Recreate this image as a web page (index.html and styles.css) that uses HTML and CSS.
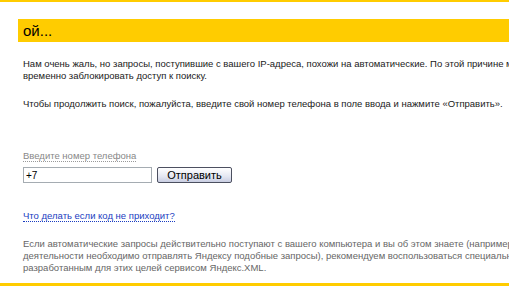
FILE: index.html
```html
<!DOCTYPE html>
<html lang="ru">
<head>
    <meta charset="UTF-8">
    <title>Ой...</title>
    <link rel="stylesheet" href="styles.css">
</head>
<body>
    <div class="topline"></div>
    <div class="page">
        <h1 class="title">ой...</h1>

        <div class="content">
            <p>Нам очень жаль, но запросы, поступившие с вашего IP-адреса, похожи на автоматические. По этой причине мы вынуждены временно заблокировать доступ к поиску.</p>
            <p>Чтобы продолжить поиск, пожалуйста, введите свой номер телефона в поле ввода и нажмите «Отправить».</p>

            <form class="phone-form" onsubmit="return false;">
                <label class="hint" for="phone">Введите номер телефона</label>
                <div class="row">
                    <input type="text" id="phone" value="+7">
                    <button type="submit">Отправить</button>
                </div>
            </form>

            <p class="help"><a href="#">Что делать если код не приходит?</a></p>

            <p class="note">Если автоматические запросы действительно поступают с вашего компьютера и вы об этом знаете (например, вам по роду деятельности необходимо отправлять Яндексу подобные запросы), рекомендуем воспользоваться специально разработанным для этих целей сервисом Яндекс.XML.</p>
        </div>
    </div>
    <div class="bottomline"></div>
</body>
</html>
```

FILE: styles.css
```css
html, body {
    margin: 0;
    padding: 0;
    overflow: hidden;
}
body {
    font-family: "Liberation Sans", Arial, sans-serif;
    font-size: 9.5px;
    color: #1a1a1a;
    background: #fff;
    width: 600px;
}
.topline {
    height: 2px;
    background: #ffcc00;
}
.page {
    padding: 17px 0 0 18px;
}
.title {
    margin: 0;
    background: #ffcc00;
    font-size: 15px;
    font-weight: normal;
    line-height: 23px;
    padding: 0 5px;
    color: #000;
}
.content {
    padding: 0 25px 0 5px;
}
.content p {
    margin: 16px 0;
    line-height: 12px;
}
.phone-form {
    margin-top: 40px;
    line-height: 12px;
}
.hint {
    color: #888;
    border-bottom: 1px dotted #999;
}
.row {
    display: flex;
    gap: 5px;
    margin-top: 5px;
}
.row input {
    box-sizing: border-box;
    width: 129px;
    height: 16px;
    padding: 0 2px;
    border: 1px solid #a5acb2;
    font-family: inherit;
    font-size: 10px;
    color: #000;
}
.row button {
    box-sizing: border-box;
    width: 75px;
    height: 16px;
    padding: 0;
    border: 1px solid #4c5060;
    border-radius: 2px;
    background: linear-gradient(#fff, #e4e7f2 60%, #c9cee2);
    font-family: inherit;
    font-size: 11px;
    line-height: 13px;
    color: #000;
}
.content .help {
    margin-top: 27px;
}
.help a {
    color: #1a3dc1;
    text-decoration: none;
    border-bottom: 1px dotted #1a3dc1;
}
.content .note {
    margin: 16px 0 0;
    color: #666;
}
.bottomline {
    height: 3px;
    background: #ffcc00;
    margin-top: 9px;
}
```
